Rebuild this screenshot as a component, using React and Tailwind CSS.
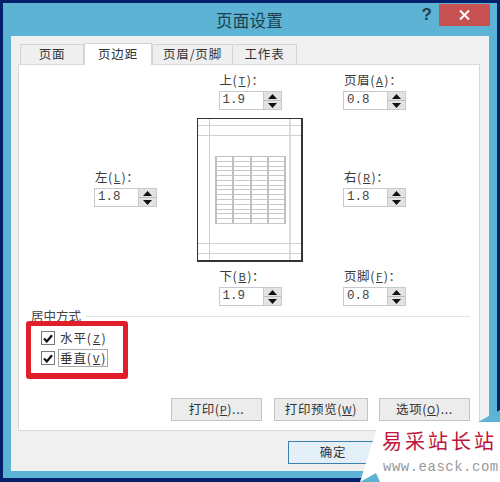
const font = { fontFamily: '"Noto Sans CJK SC", "Liberation Sans", sans-serif' };

function Spin({ label, mnemonic, value, className = "" }) {
  return (
    <div className={`w-[63px] flex flex-col ${className}`}>
      <div className="h-[17px] pl-px text-[12.5px] leading-[17px] tracking-[0.6px] text-[#3a3a3a] whitespace-nowrap">
        {label}(<span className="underline text-[11px] px-px">{mnemonic}</span>)：
      </div>
      <div className="mt-[3px] flex h-[19px] border border-[#c9c9c9] bg-white">
        <div className="flex-1 pl-[3px] text-[12.5px] leading-[17px] text-[#444]" style={{ fontFamily: '"Liberation Mono", monospace' }}>{value}</div>
        <div className="w-[18px] flex flex-col bg-[#e3e3e3] border-l border-[#c9c9c9]">
          <div className="flex-1 flex items-center justify-center border-b border-[#bdbdbd]">
            <svg width="9" height="5" viewBox="0 0 9 5"><path d="M4.5 0 L9 5 H0 Z" fill="#111" /></svg>
          </div>
          <div className="flex-1 flex items-center justify-center">
            <svg width="9" height="5" viewBox="0 0 9 5"><path d="M0 0 H9 L4.5 5 Z" fill="#111" /></svg>
          </div>
        </div>
      </div>
    </div>
  );
}

function Tab({ children, active, className = "" }) {
  return (
    <div className={`flex items-center justify-center border border-[#d4d4d4] text-[12.5px] tracking-[0.8px] text-[#333] ${active ? "h-[22px] -mt-[2px] bg-white border-b-0 relative z-10 -mb-px" : "h-[20px] bg-[#efefef] border-b-0"} ${className}`}>
      {children}
    </div>
  );
}

function Check({ children, focused }) {
  return (
    <div className="flex items-center h-[20px]">
      <div className="w-[14px] h-[14px] border border-[#7a7a7a] bg-white flex items-center justify-center">
        <svg width="10" height="9" viewBox="0 0 10 9"><path d="M1 4.5 L3.8 7.5 L9 1.2" fill="none" stroke="#111" strokeWidth="2.2" /></svg>
      </div>
      <span className={`ml-[3px] px-px text-[12.5px] leading-[15px] tracking-[0.9px] text-[#333] ${focused ? "border border-[#a8a8a8]" : "border border-transparent"}`}>{children}</span>
    </div>
  );
}

function Btn({ children, className = "" }) {
  return (
    <div className={`h-[23px] flex items-center justify-center border border-[#c4c4c4] bg-[#ececec] text-[12.5px] tracking-[0.6px] text-[#333] ${className}`}>
      {children}
    </div>
  );
}

function PagePreview() {
  const rows = Array.from({ length: 14 });
  return (
    <div className="relative w-[106px] h-[144px] border-t border-l border-[#333] border-r-2 border-b-2 bg-white">
      <div className="absolute left-[11px] top-0 bottom-0 w-px bg-[#d0d0d0]" />
      <div className="absolute right-[10px] top-0 bottom-0 w-[2px] bg-[#dcdcdc]" />
      <div className="absolute left-0 right-0 top-[6px] h-px bg-[#d0d0d0]" />
      <div className="absolute left-0 right-0 top-[16px] h-px bg-[#d0d0d0]" />
      <div className="absolute left-0 right-0 bottom-[16px] h-px bg-[#d0d0d0]" />
      <div className="absolute left-0 right-0 bottom-[6px] h-px bg-[#d0d0d0]" />
      <div className="absolute left-[17px] top-[37px] w-[71px] h-[68px] grid grid-cols-4 border-l-2 border-t border-[#c0c0c0]">
        {Array.from({ length: 4 }).map((_, c) => (
          <div key={c} className="flex flex-col border-r-2 border-[#c0c0c0]">
            {rows.map((_, r) => (
              <div key={r} className="flex-1 border-b border-[#c8c8c8]" />
            ))}
          </div>
        ))}
      </div>
    </div>
  );
}

export default function App() {
  return (
    <div className="relative w-[500px] h-[482px] overflow-hidden bg-[#03206b] pt-[3px] pl-[3px] pr-[3px] pb-[4px]" style={font}>
      <div className="h-full bg-[#5cb3d4] flex flex-col px-[8px] pb-[7px]">
        <div className="relative h-[33px] flex items-center justify-center">
          <span className="text-[16.5px] tracking-[0.3px] text-[#1c3f50] mt-[1px] -ml-px">页面设置</span>
          <span className="absolute right-[57px] top-[2px] text-[17px] font-bold leading-[20px] text-[#1c3f50]" style={{ fontFamily: '"Liberation Sans", sans-serif' }}>?</span>
          <div className="absolute right-[-1px] top-[1px] w-[51px] h-[22px] bg-[#c75050] flex items-center justify-center">
            <svg width="11" height="10" viewBox="0 0 11 10"><path d="M1 .5 L10 9.5 M10 .5 L1 9.5" stroke="#fff" strokeWidth="2" /></svg>
          </div>
        </div>
        <div className="flex-1 bg-[#f0f0f0] flex flex-col pl-[7px] pr-[9px]">
          <div className="flex h-[28px] items-end pl-[2px]">
            <Tab className="w-[64px]">页面</Tab>
            <Tab active className="w-[68px]">页边距</Tab>
            <Tab className="w-[81px]">页眉/页脚</Tab>
            <Tab className="w-[65px] -ml-px">工作表</Tab>
          </div>
          <div className="h-[367px] bg-white border border-[#d9d9d9] flex flex-col pt-[6px]">
            <div className="grid grid-cols-[63px_40px_106px_40px_63px] grid-rows-[47px_149px_38px] ml-[75px]">
              <div />
              <div />
              <Spin label="上" mnemonic="T" value="1.9" className="justify-self-center col-start-3" />
              <div />
              <Spin label="页眉" mnemonic="A" value="0.8" />

              <Spin label="左" mnemonic="L" value="1.8" className="mt-[50px]" />
              <div />
              <PagePreview />
              <div />
              <Spin label="右" mnemonic="R" value="1.8" className="mt-[50px]" />

              <div />
              <div />
              <Spin label="下" mnemonic="B" value="1.9" className="justify-self-center" />
              <div />
              <Spin label="页脚" mnemonic="F" value="0.8" />
            </div>
            <div className="mt-[3px] flex items-center pl-[12px] pr-[9px] h-[17px]">
              <span className="text-[12.5px] text-[#444] whitespace-nowrap">居中方式</span>
              <div className="ml-[5px] flex-1 h-px bg-[#e2e2e2]" />
            </div>
            <div className="pl-[22px] flex flex-col mt-[3px]">
              <Check>水平(<span className="underline text-[11px] px-px">Z</span>)</Check>
              <Check focused>垂直(<span className="underline text-[11px] px-px">V</span>)</Check>
            </div>
            <div className="mt-[30px] flex justify-end pr-[9px]">
              <Btn className="w-[91px]">打印(<span className="underline text-[11px]">P</span>)...</Btn>
              <Btn className="w-[94px] ml-[12px]">打印预览(<span className="underline text-[11px]">W</span>)</Btn>
              <Btn className="w-[91px] ml-[11px]">选项(<span className="underline text-[11px]">O</span>)...</Btn>
            </div>
          </div>
          <div className="flex-1 flex items-start pt-[10px] pl-[270px]">
            <div className="w-[90px] h-[23px] border border-[#3c7fb1] bg-[#e4f0f8] flex items-center justify-center text-[12.5px] tracking-[0.8px] text-[#333]">确定</div>
          </div>
        </div>
      </div>

      <div className="absolute inset-0 pointer-events-none">
        <svg className="absolute left-0 top-0" width="500" height="482" viewBox="0 0 500 482">
          <path d="M500 420 L377 428 L360 482 L500 482 Z" fill="#fff" />
          <path d="M360 482 L376 473 L380 482 Z" fill="#5cb3d4" />
          <path d="M478 422 L500 410 L500 422 Z" fill="#5cb3d4" />
        </svg>
        <div className="absolute left-[382px] top-[428px] text-[20px] leading-[26px] tracking-[3px] text-[#c0143c] whitespace-nowrap">易采站长站</div>
        <div className="absolute left-[383px] top-[458px] text-[14px] leading-[18px] tracking-[0.5px] text-[#9a9a9a] whitespace-nowrap" style={{ fontFamily: '"Liberation Mono", monospace' }}>www.easck.com</div>
        <div className="absolute left-[26px] top-[321px] w-[102px] h-[58px] border-[5px] border-b-[6px] border-[#e11f2b] rounded-[3px]" />
      </div>
    </div>
  );
}
